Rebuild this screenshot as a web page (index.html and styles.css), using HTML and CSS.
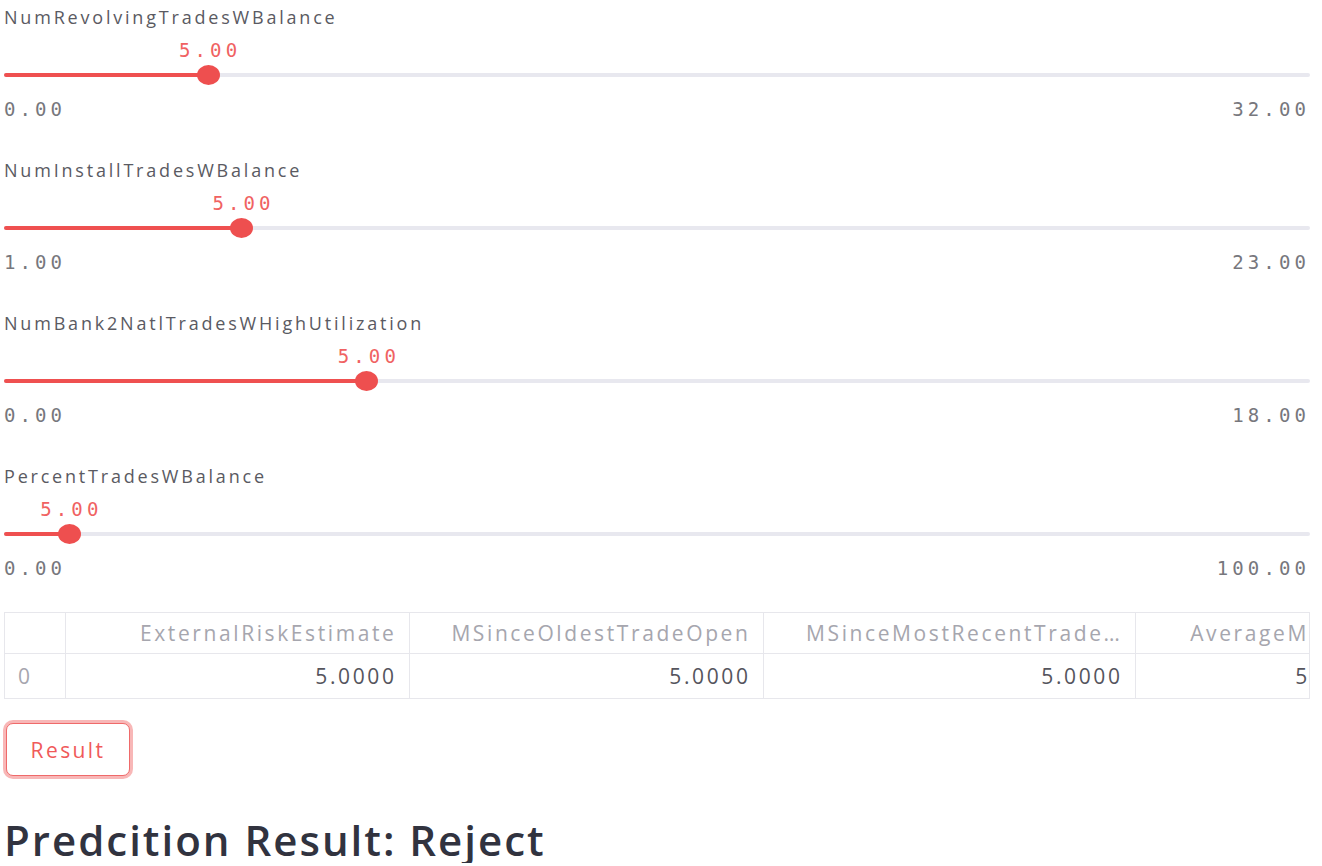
FILE: index.html
```html
<!DOCTYPE html>
<html>
<head>
<meta charset="utf-8">
<link rel="stylesheet" href="styles.css">
</head>
<body>
<main class="app">
  <section class="field">
    <div class="label">NumRevolvingTradesWBalance</div>
    <div class="value-row"><span class="value" style="left: 15.625%">5.00</span></div>
    <div class="track"><div class="fill" style="width: 15.625%"></div><span class="thumb" style="left: 15.625%"></span></div>
    <div class="ticks"><span>0.00</span><span>32.00</span></div>
  </section>
  <section class="field">
    <div class="label">NumInstallTradesWBalance</div>
    <div class="value-row"><span class="value" style="left: 18.18%">5.00</span></div>
    <div class="track"><div class="fill" style="width: 18.18%"></div><span class="thumb" style="left: 18.18%"></span></div>
    <div class="ticks"><span>1.00</span><span>23.00</span></div>
  </section>
  <section class="field">
    <div class="label">NumBank2NatlTradesWHighUtilization</div>
    <div class="value-row"><span class="value" style="left: 27.78%">5.00</span></div>
    <div class="track"><div class="fill" style="width: 27.78%"></div><span class="thumb" style="left: 27.78%"></span></div>
    <div class="ticks"><span>0.00</span><span>18.00</span></div>
  </section>
  <section class="field field-last">
    <div class="label">PercentTradesWBalance</div>
    <div class="value-row"><span class="value" style="left: 5%">5.00</span></div>
    <div class="track"><div class="fill" style="width: 5%"></div><span class="thumb" style="left: 5%"></span></div>
    <div class="ticks"><span>0.00</span><span>100.00</span></div>
  </section>

  <div class="table-wrap">
    <table class="df">
      <colgroup>
        <col class="w-idx">
        <col class="w-c1">
        <col class="w-c2">
        <col class="w-c3">
        <col class="w-c4">
      </colgroup>
      <thead>
        <tr>
          <th class="idx"></th>
          <th>ExternalRiskEstimate</th>
          <th>MSinceOldestTradeOpen</th>
          <th>MSinceMostRecentTrade…</th>
          <th>AverageMInFile</th>
        </tr>
      </thead>
      <tbody>
        <tr>
          <td class="idx">0</td>
          <td>5.0000</td>
          <td>5.0000</td>
          <td>5.0000</td>
          <td>5.0000</td>
        </tr>
      </tbody>
    </table>
  </div>

  <div class="btn-row"><button class="btn">Result</button></div>

  <h2 class="result">Predcition Result: Reject</h2>
</main>
</body>
</html>
```
FILE: styles.css
```css
* { box-sizing: border-box; }
html, body { margin: 0; padding: 0; background: #ffffff; }
body { font-family: "Open Sans", "Noto Sans", sans-serif; color: #31333f; }

.app {
  width: 1306px;
  margin-left: 4px;
  padding-top: 5px;
  display: flex;
  flex-direction: column;
}

.field {
  height: 153px;
  display: flex;
  flex-direction: column;
  flex: none;
}
.field-last { height: 148px; }

.label {
  height: 24px;
  line-height: 24px;
  font-size: 18px;
  letter-spacing: 2.8px;
  color: #5a5a62;
  white-space: nowrap;
}

.value-row {
  position: relative;
  height: 24px;
  margin-top: 9px;
}
.value {
  position: absolute;
  top: 0;
  transform: translateX(-50%);
  font-family: "DejaVu Sans Mono", "Liberation Mono", monospace;
  font-size: 19px;
  line-height: 24px;
  letter-spacing: 4.1px;
  padding-left: 4.1px;
  color: #f06262;
  white-space: nowrap;
}

.track {
  position: relative;
  height: 4px;
  margin-top: 11px;
  margin-bottom: 8px;
  background: #e8e8ef;
  border-radius: 2px;
}
.fill {
  height: 4px;
  background: #ef5050;
  border-radius: 2px;
}
.thumb {
  position: absolute;
  top: 50%;
  width: 23px;
  height: 20px;
  margin-left: -11.5px;
  margin-top: -10px;
  border-radius: 50%;
  background: #ee4f4f;
}

.ticks {
  display: flex;
  justify-content: space-between;
  margin-top: 12px;
  height: 24px;
  line-height: 24px;
  font-family: "DejaVu Sans Mono", "Liberation Mono", monospace;
  font-size: 19px;
  letter-spacing: 4.1px;
  color: #77777d;
}

.table-wrap {
  width: 1306px;
  overflow: hidden;
  border: 1px solid #e7e7ec;
  flex: none;
}
.df {
  border-collapse: collapse;
  table-layout: fixed;
  width: 1384px;
  font-size: 21px;
  letter-spacing: 2.6px;
}
.w-idx { width: 60px; }
.w-c1 { width: 344px; }
.w-c2 { width: 354px; }
.w-c3 { width: 372px; }
.w-c4 { width: 254px; }

.df th, .df td {
  border-right: 1px solid #e7e7ec;
  text-align: right;
  padding: 0 12px 0 0;
  white-space: nowrap;
  overflow: hidden;
  font-weight: 400;
}
.df th {
  height: 40px;
  color: #a6a6ae;
  border-bottom: 1px solid #e7e7ec;
}
.df td {
  height: 45px;
  color: #55555d;
}
.df .idx { text-align: left; padding-left: 13px; color: #a6a6ae; }

.btn-row {
  margin-top: 24px;
  padding-left: 2px;
}
.btn {
  width: 124px;
  height: 53px;
  background: #ffffff;
  border: 1.5px solid #ef6a6a;
  border-radius: 7px;
  box-shadow: 0 0 0 3px rgba(239, 95, 95, 0.45);
  font-family: "Open Sans", "Noto Sans", sans-serif;
  font-size: 21px;
  letter-spacing: 2.4px;
  color: #f05a5a;
  padding: 0;
}

.result {
  margin: 41px 0 0 0;
  font-size: 42px;
  font-weight: 600;
  letter-spacing: 2px;
  line-height: 46px;
  color: #31333f;
}
```
